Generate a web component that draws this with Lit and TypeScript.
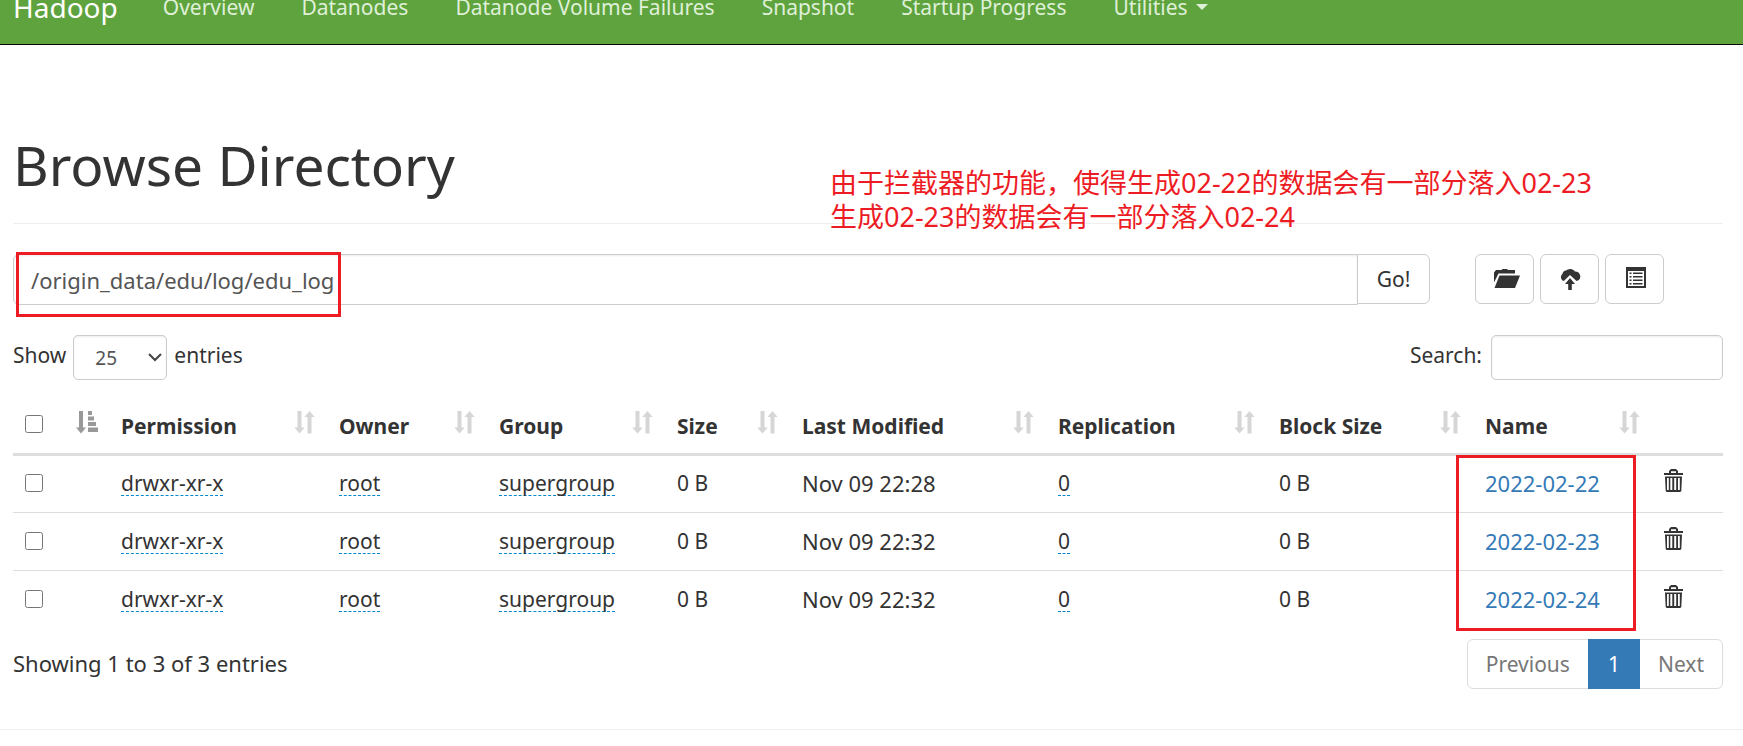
import { LitElement, html, svg, css } from "lit";
import { customElement, property, state } from "lit/decorators.js";

type SortState = "none" | "both" | "asc";

interface Column {
  key: string;
  label: string;
  sort: SortState;
}

interface Entry {
  permission: string;
  owner: string;
  group: string;
  size: string;
  modified: string;
  replication: string;
  blockSize: string;
  name: string;
}

const COLUMNS: Column[] = [
  { key: "select", label: "", sort: "asc" },
  { key: "permission", label: "Permission", sort: "both" },
  { key: "owner", label: "Owner", sort: "both" },
  { key: "group", label: "Group", sort: "both" },
  { key: "size", label: "Size", sort: "both" },
  { key: "modified", label: "Last Modified", sort: "both" },
  { key: "replication", label: "Replication", sort: "both" },
  { key: "block", label: "Block Size", sort: "both" },
  { key: "name", label: "Name", sort: "both" },
  { key: "actions", label: "", sort: "none" },
];

const entry = (name: string, modified: string): Entry => ({
  permission: "drwxr-xr-x",
  owner: "root",
  group: "supergroup",
  size: "0 B",
  modified,
  replication: "0",
  blockSize: "0 B",
  name,
});

const GLYPHS = {
  folder: svg`
    <path d="M0 15.500V5.500L2 3H7.500L8.500 2H13L14 3H21V6.500H4.500z"/>
    <path d="M5.500 8.500H26L21 21H.5z"/>`,
  upload: svg`
    <path d="M3.500 13.500A4.300 4.300 0 0 1 3.500 6.800A4 4 0 0 1 7 3.500A6 6 0 0 1 16 4.500A5 5 0 0 1 19.500 13.300L17.500 14L11 8L4.800 14z"/>
    <path d="M11 11l5 6h-3.200v6H9.200v-6H6z"/>`,
  list: svg`
    <path fill-rule="evenodd" d="M2 0h20v21H2zM4 4v15h16V4z"/>
    <path d="M5.500 5.500h2v1.500h-2zM9 5.500h9.500v1.500H9zM5.500 9h2v1.500h-2zM9 9h9.500v1.500H9zM5.500 12.500h2V14h-2zM9 12.500h9.500V14H9zM5.500 16h2v1.500h-2zM9 16h9.500v1.500H9z"/>`,
  both: svg`
    <path d="M3.500 0h4v16.500h3.200L5.500 22.500L.3 16.500h3.200z"/>
    <path d="M13.500 22.500h4V6h3.200L15.500 0L10.300 6h3.200z"/>`,
  asc: svg`
    <path d="M3 0h4v16.500h3L5 22.500L0 16.500h3z"/>
    <path d="M12 0h4v4h-4zM12 5.500h6v4h-6zM12 11h8v4h-8zM12 16.500h10v4.500H12z"/>`,
  trash: svg`
    <path fill-rule="evenodd" d="M5 4V2L7 0h5l2 2v2h5v2H0V4zM7 4h5V2.200H7z"/>
    <path fill-rule="evenodd" d="M1 7.500h17l-.7 14.500l-1 1H2.700l-1-1zM3 9v12h1.800V9zM6.300 9v12h2V9zM10.200 9v12h2V9zM14 9v12h1.800V9z"/>`,
};

type GlyphName = keyof typeof GLYPHS;

const GLYPH_SIZES: Record<GlyphName, [number, number]> = {
  folder: [26, 23],
  upload: [22, 23],
  list: [22, 23],
  both: [21, 23],
  asc: [22, 23],
  trash: [19, 23],
};

@customElement("glyph-icon")
export class GlyphIcon extends LitElement {
  static styles = css`
    :host {
      display: inline-flex;
    }
    svg {
      display: block;
      fill: currentColor;
    }
  `;

  @property() name: GlyphName = "both";

  render() {
    const [w, h] = GLYPH_SIZES[this.name];
    return html`<svg width=${w} height=${h} viewBox="0 0 ${w} ${h}" aria-hidden="true">
      ${GLYPHS[this.name]}
    </svg>`;
  }
}

@customElement("app-root")
export class AppRoot extends LitElement {
  static styles = css`
    :host {
      display: block;
      overflow: hidden;
      background: #fff;
      color: #333;
      font-family: "Noto Sans", "Noto Sans CJK SC", sans-serif;
      font-size: 21px;
      line-height: 32px;
      --line: #ddd;
      --control: #ccc;
      --link: #337ab7;
      --mark: #ed1c24;
    }
    * {
      box-sizing: border-box;
    }
    a {
      text-decoration: none;
    }
    input,
    select,
    button {
      font: inherit;
      color: inherit;
      margin: 0;
    }

    .navbar {
      display: flex;
      align-items: center;
      height: 78px;
      margin-top: -33px;
      padding: 2px 0 0 13px;
      background: #5fa33e;
      border-bottom: 1px solid #080808;
      white-space: nowrap;
    }
    .brand {
      font-size: 28px;
      color: #fff;
      margin-right: 22px;
    }
    .menu {
      display: flex;
      gap: 1px;
      list-style: none;
      margin: 0;
      padding: 0;
    }
    .menu-link {
      display: flex;
      align-items: center;
      gap: 8px;
      padding: 0 23px;
      color: #dff0d8;
    }
    .caret {
      border: 6px solid transparent;
      border-top-color: currentColor;
      border-bottom: 0;
    }

    .page {
      padding: 0 20px 0 13px;
    }
    .heading {
      position: relative;
      padding: 86px 0 24px;
      margin-bottom: 30px;
      border-bottom: 1px solid #eee;
    }
    h1 {
      margin: 0;
      font-size: 55px;
      line-height: 68px;
      font-weight: 400;
    }
    .note {
      position: absolute;
      left: 817px;
      top: 121px;
      margin: 0;
      font-size: 27px;
      line-height: 34px;
      color: var(--mark);
      white-space: nowrap;
    }

    .toolbar {
      display: grid;
      grid-template-columns: 5fr 1fr;
      margin: 0 -23px 30px;
    }
    .path {
      position: relative;
      display: flex;
      align-items: flex-start;
      padding: 0 23px;
    }
    .path-input {
      flex: 1;
      min-width: 0;
      height: 51px;
      padding: 0 17px;
      border: 1px solid var(--control);
      border-radius: 6px 0 0 6px;
      box-shadow: inset 0 1px 2px rgba(0, 0, 0, 0.08);
      color: #555;
      font-size: 22px;
    }
    .button {
      display: flex;
      align-items: center;
      justify-content: center;
      height: 50px;
      padding: 0 19px;
      border: 1px solid var(--control);
      border-radius: 6px;
      background: #fff;
    }
    .go {
      border-radius: 0 6px 6px 0;
      margin-left: -1px;
    }
    .tools {
      display: flex;
      gap: 6px;
      padding: 0 22px;
    }
    .tool {
      width: 59px;
      justify-content: flex-start;
      padding: 0 0 2px 18px;
    }
    .mark {
      position: absolute;
      z-index: 1;
      border: 3px solid var(--mark);
      pointer-events: none;
    }
    .mark-path {
      left: 26px;
      top: -2px;
      width: 325px;
      height: 65px;
    }

    .controls {
      display: flex;
      justify-content: space-between;
      height: 45px;
    }
    .control-label {
      display: flex;
      align-items: flex-start;
      gap: 7px;
      line-height: 40px;
    }
    .select {
      position: relative;
      display: flex;
    }
    .length {
      appearance: none;
      width: 94px;
      height: 45px;
      padding: 0 21px;
      border: 1px solid var(--control);
      border-radius: 5px;
      background: #fff;
      box-shadow: inset 0 1px 2px rgba(0, 0, 0, 0.08);
      font-size: 19px;
      color: #555;
    }
    .chevron {
      position: absolute;
      right: 5px;
      top: 18px;
      fill: none;
      stroke: #444;
      stroke-width: 2;
      pointer-events: none;
    }
    .search-label {
      gap: 9px;
    }
    .search {
      width: 232px;
      height: 45px;
      padding: 0 15px;
      border: 1px solid var(--control);
      border-radius: 5px;
      box-shadow: inset 0 1px 2px rgba(0, 0, 0, 0.08);
    }

    .table-wrap {
      margin-bottom: 11px;
    }
    table {
      width: 100%;
      table-layout: fixed;
      border-collapse: separate;
      border-spacing: 0;
    }
    .col-select { width: 96px; }
    .col-permission { width: 218px; }
    .col-owner { width: 160px; }
    .col-group { width: 178px; }
    .col-size { width: 125px; }
    .col-modified { width: 256px; }
    .col-replication { width: 221px; }
    .col-block { width: 206px; }
    .col-name { width: 179px; }
    .col-actions { width: 71px; }
    th,
    td {
      text-align: left;
      white-space: nowrap;
    }
    td {
      height: 56px;
      padding: 10px 12px 12px;
    }
    th {
      padding: 30px 12px 11px;
      border-bottom: 3px solid var(--line);
      font-weight: 700;
    }
    tr + tr td {
      height: 58px;
      border-top: 1px solid var(--line);
    }
    .head {
      display: flex;
      align-items: center;
      justify-content: space-between;
      height: 32px;
    }
    .sort {
      color: #d6d6d6;
      margin-bottom: 7px;
    }
    .sort-active {
      color: #999;
      margin-right: -1px;
    }
    .check {
      display: block;
      width: 18px;
      height: 18px;
    }
    .head .check {
      margin-bottom: 4px;
    }
    .editable {
      display: inline-block;
      line-height: 24px;
      color: #333;
      border-bottom: 1px dashed #08c;
    }
    .date {
      font-size: 22px;
    }
    .name-link {
      color: var(--link);
    }
    .name-cell {
      position: relative;
    }
    .mark-names {
      left: -17px;
      top: -1px;
      width: 180px;
      height: 176px;
    }
    .trash {
      display: block;
      padding: 0 0 5px;
      border: 0;
      background: none;
    }
    .trash glyph-icon {
      display: flex;
    }

    .footer {
      display: flex;
      justify-content: space-between;
      padding-bottom: 40px;
    }
    .info {
      padding-top: 8px;
      font-size: 22px;
    }
    .pages {
      display: flex;
      height: 50px;
      border: 1px solid var(--line);
      border-radius: 6px;
    }
    .page-link {
      display: flex;
      align-items: center;
      padding: 0 18px;
      color: #777;
    }
    .page-current {
      margin: -1px 0;
      padding: 0 20px;
      background: var(--link);
      color: #fff;
    }
    .rule {
      height: 1px;
      margin: 0;
      border: 0;
      background: #eee;
    }
  `;

  @state() private menu = [
    "Overview",
    "Datanodes",
    "Datanode Volume Failures",
    "Snapshot",
    "Startup Progress",
    "Utilities",
  ];

  @state() private entries: Entry[] = [
    entry("2022-02-22", "Nov 09 22:28"),
    entry("2022-02-23", "Nov 09 22:32"),
    entry("2022-02-24", "Nov 09 22:32"),
  ];

  private renderHead(column: Column) {
    const label =
      column.key === "select"
        ? html`<input class="check" type="checkbox" aria-label="Select all" />`
        : column.label;
    return html`<th scope="col">
      <div class="head">
        <span>${label}</span>
        ${column.sort === "none"
          ? null
          : html`<glyph-icon
              class="sort ${column.sort === "asc" ? "sort-active" : ""}"
              name=${column.sort}
            ></glyph-icon>`}
      </div>
    </th>`;
  }

  private renderRow(row: Entry, index: number) {
    const editable = (text: string) => html`<a class="editable" href="#">${text}</a>`;
    return html`<tr>
      <td><input class="check" type="checkbox" aria-label="Select ${row.name}" /></td>
      <td>${editable(row.permission)}</td>
      <td>${editable(row.owner)}</td>
      <td>${editable(row.group)}</td>
      <td>${row.size}</td>
      <td class="date">${row.modified}</td>
      <td>${editable(row.replication)}</td>
      <td>${row.blockSize}</td>
      <td class="date name-cell">
        <a class="name-link" href="#">${row.name}</a>
        ${index === 0 ? html`<span class="mark mark-names"></span>` : null}
      </td>
      <td>
        <button class="trash" aria-label="Delete ${row.name}">
          <glyph-icon name="trash"></glyph-icon>
        </button>
      </td>
    </tr>`;
  }

  render() {
    return html`
      <nav class="navbar">
        <a class="brand" href="#">Hadoop</a>
        <ul class="menu">
          ${this.menu.map(
            (item) => html`<li>
              <a class="menu-link" href="#"
                >${item}${item === "Utilities" ? html`<span class="caret"></span>` : null}</a
              >
            </li>`
          )}
        </ul>
      </nav>
      <main class="page">
        <header class="heading">
          <h1>Browse Directory</h1>
          <p class="note">
            由于拦截器的功能，使得生成02-22的数据会有一部分落入02-23<br />生成02-23的数据会有一部分落入02-24
          </p>
        </header>
        <div class="toolbar">
          <div class="path">
            <input
              class="path-input"
              type="text"
              aria-label="Directory"
              .value=${"/origin_data/edu/log/edu_log"}
            />
            <button class="button go">Go!</button>
            <span class="mark mark-path"></span>
          </div>
          <div class="tools">
            <button class="button tool" aria-label="Create directory">
              <glyph-icon name="folder"></glyph-icon>
            </button>
            <button class="button tool" aria-label="Upload files">
              <glyph-icon name="upload"></glyph-icon>
            </button>
            <button class="button tool" aria-label="Cut and paste">
              <glyph-icon name="list"></glyph-icon>
            </button>
          </div>
        </div>
        <div class="controls">
          <label class="control-label"
            >Show
            <span class="select">
              <select class="length">
                <option>25</option>
                <option>50</option>
                <option>100</option>
              </select>
              <svg class="chevron" width="14" height="9" viewBox="0 0 14 9" aria-hidden="true">
                <path d="M1 1l6 6l6-6" />
              </svg>
            </span>
            entries</label
          >
          <label class="control-label search-label"
            >Search: <input class="search" type="search"
          /></label>
        </div>
        <div class="table-wrap">
          <table>
            <colgroup>
              ${COLUMNS.map((c) => html`<col class="col-${c.key}" />`)}
            </colgroup>
            <thead>
              <tr>
                ${COLUMNS.map((c) => this.renderHead(c))}
              </tr>
            </thead>
            <tbody>
              ${this.entries.map((row, i) => this.renderRow(row, i))}
            </tbody>
          </table>
        </div>
        <div class="footer">
          <div class="info">Showing 1 to ${this.entries.length} of ${this.entries.length} entries</div>
          <nav class="pages" aria-label="Pages">
            <a class="page-link" href="#">Previous</a>
            <a class="page-link page-current" href="#">1</a>
            <a class="page-link" href="#">Next</a>
          </nav>
        </div>
      </main>
      <hr class="rule" />
    `;
  }
}
